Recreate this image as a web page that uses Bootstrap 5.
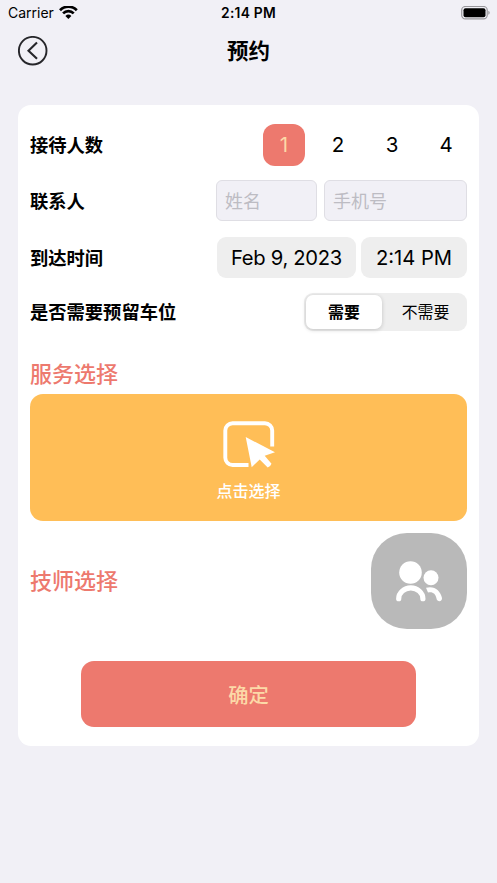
<!DOCTYPE html>
<html lang="zh-CN">
<head>
<meta charset="utf-8">
<meta name="viewport" content="width=device-width, initial-scale=1">
<title>预约</title>
<link rel="stylesheet" href="https://cdn.jsdelivr.net/npm/bootstrap@5.3.0/dist/css/bootstrap.min.css">
<style>
  body { background: #f1f0f6; color: #000; font-family: Inter, "Noto Sans CJK SC", sans-serif; height: 883px; overflow: hidden; }
  .status-bar { height: 26px; padding: 0 7px 0 8px; font-size: 14px; line-height: 26px; }
  .status-bar > div { flex: 1 1 0; }
  .status-time { font-weight: 600; font-size: 13.8px; letter-spacing: .25px; padding-right: 1px; }
  .title-bar { height: 50px; padding: 0 18px; }
  .title-bar h1 { font-size: 21.5px; font-weight: 700; line-height: 30px; }
  .side { width: 30px; height: 30px; }
  .booking { margin: 29px 18px 0; height: 641px; padding: 19px 12px; border: 0; border-radius: 13px; }
  .field-label { font-size: 18.3px; font-weight: 700; line-height: 26px; }
  .counts { gap: 12px; }
  .count { width: 42px; height: 42px; padding: 0; border: 0; border-radius: 12px; font-size: 20.5px; line-height: 42px; color: #000; }
  .count.active { background: #ed796e !important; color: #fcd9a8 !important; }
  .contact-row { margin-top: 14px; }
  .contact-fields { gap: 7px; }
  .field-input { height: 41px; padding: 2px 8px 0; border: 1px solid #dfdee4; border-radius: 6px; background: #f1f0f6; font-size: 18px; }
  .field-input::placeholder { color: #bdbcc3; opacity: 1; }
  .name { width: 101px; }
  .phone { width: 143px; }
  .pickers { gap: 5px; }
  .picker { height: 41px; border-radius: 9px; background: #eee; font-size: 20.2px; padding-top: 1px; }
  .date { width: 139px; letter-spacing: -.3px; }
  .time { width: 106px; }
  .parking-row { margin-top: 15px; }
  .segments { width: 163px; height: 38px; padding: 2px; border-radius: 9px; background: #eee; font-size: 15.9px; }
  .segments > div { padding-top: 2px; }
  .segments .seg-on { width: 76px; background: #fff; border-radius: 7px; font-weight: 700; box-shadow: 0 1px 4px rgba(0,0,0,.18); }
  .segments .seg-off { padding-left: 4px; }
  .heading { color: #ed796e; font-size: 22px; font-weight: 500; line-height: 32px; }
  .service-heading { margin-top: 27px; }
  .service { margin-top: 4px; height: 127px; border: 0; border-radius: 13px; background: #ffbe57 !important; color: #fff !important; padding: 27px 0 0; font-size: 16px; font-weight: 500; line-height: 24px; }
  .service span { margin-top: 10px; }
  .staff-row { margin-top: 12px; }
  .people { width: 96px; height: 96px; padding: 0; border: 0; border-radius: 36px; background: #b9b9b9 !important; }
  .people svg { display: block; }
  .confirm { margin-top: 32px; width: 335px; height: 66px; border: 0; border-radius: 13px; background: #ed796e !important; color: #fcd9a8 !important; font-size: 20.3px; font-weight: 500; padding-top: 10px; }
</style>
</head>
<body>
<div class="status-bar d-flex align-items-center">
  <div class="d-flex align-items-center"><span>Carrier</span>
    <svg class="ms-1" width="20" height="15" viewBox="0 0 20 15" fill="none" stroke="#000" stroke-width="2.7"><path d="M2 4.2a11.8 11.8 0 0 1 16.8 0M5.1 7.4a7.4 7.4 0 0 1 10.6 0"/><path d="M10.4 13l-3-3.1a4.300 4.300 0 0 1 6 0z" fill="#000" stroke="none"/></svg>
  </div>
  <div class="status-time text-center">2:14 PM</div>
  <div class="d-flex justify-content-end">
    <svg width="29" height="14" viewBox="0 0 29 14"><rect x=".7" y=".5" width="25.5" height="12.4" rx="3.6" fill="none" stroke="#98979c" stroke-width="1.2"/><rect x="2.5" y="2.2" width="22" height="9" rx="2" fill="#000"/><path d="M27.3 4.7q1.4.6 1.4 2t-1.4 2z" fill="#98979c"/></svg>
  </div>
</div>
<header class="title-bar d-flex align-items-center justify-content-between">
  <svg class="side" viewBox="0 0 30 30" fill="none" stroke="#26262a" stroke-width="1.9"><circle cx="14.7" cy="14.7" r="13.8"/><path d="M19 6.6L10.5 14.7l8.5 8.1" stroke-width="2.1"/></svg>
  <h1 class="m-0">预约</h1>
  <span class="side"></span>
</header>
<main class="booking card">
  <div class="d-flex align-items-center justify-content-between">
    <span class="field-label">接待人数</span>
    <div class="counts d-flex">
      <button class="btn count active">1</button><button class="btn count">2</button><button class="btn count">3</button><button class="btn count">4</button>
    </div>
  </div>
  <div class="contact-row d-flex align-items-center justify-content-between">
    <span class="field-label">联系人</span>
    <div class="contact-fields d-flex"><input class="form-control field-input name" placeholder="姓名"><input class="form-control field-input phone" placeholder="手机号"></div>
  </div>
  <div class="d-flex align-items-center justify-content-between mt-3">
    <span class="field-label">到达时间</span>
    <div class="pickers d-flex">
      <div class="picker date d-flex align-items-center justify-content-center">Feb 9, 2023</div>
      <div class="picker time d-flex align-items-center justify-content-center">2:14 PM</div>
    </div>
  </div>
  <div class="parking-row d-flex align-items-center justify-content-between">
    <span class="field-label">是否需要预留车位</span>
    <div class="segments d-flex">
      <div class="seg-on d-flex align-items-center justify-content-center">需要</div>
      <div class="seg-off flex-fill d-flex align-items-center justify-content-center">不需要</div>
    </div>
  </div>
  <h2 class="heading service-heading mb-0">服务选择</h2>
  <button class="btn service d-flex flex-column align-items-center">
    <svg width="54" height="48" viewBox="0 0 54 48"><path d="M50.2 25.500V9.500a7.300 7.300 0 0 0-7.300-7.300h-32.300a7.300 7.300 0 0 0-7.300 7.300v27.200a7.300 7.300 0 0 0 7.300 7.300h15.900" fill="none" stroke="#fff" stroke-width="3.900"/><path d="M23.700 16l29.300 15.300-10.300 3.400 6.800 8q-1 2.800-3.800 3.700l-8-7.900-8 7.700z" fill="#fff"/></svg>
    <span>点击选择</span>
  </button>
  <div class="staff-row d-flex align-items-center justify-content-between">
    <h2 class="heading m-0">技师选择</h2>
    <button class="btn people" aria-label="技师">
      <svg width="96" height="96" viewBox="0 0 96 96" fill="#fff"><circle cx="39.500" cy="39.500" r="11.300"/><circle cx="60" cy="44.700" r="7.500"/><path d="M27.700 65.700a12.100 10.800 0 0 1 24.200 0" fill="none" stroke="#fff" stroke-width="5.200" stroke-linecap="round"/><path d="M55 54.800c8-2.500 14.500 2.500 16 10.200c.5 4-5 4.200-5.500.500c-1-5-4-7.200-8.500-6z"/></svg>
    </button>
  </div>
  <button class="btn confirm align-self-center">确定</button>
</main>
<script src="https://cdn.jsdelivr.net/npm/bootstrap@5.3.0/dist/js/bootstrap.bundle.min.js"></script>
</body>
</html>
